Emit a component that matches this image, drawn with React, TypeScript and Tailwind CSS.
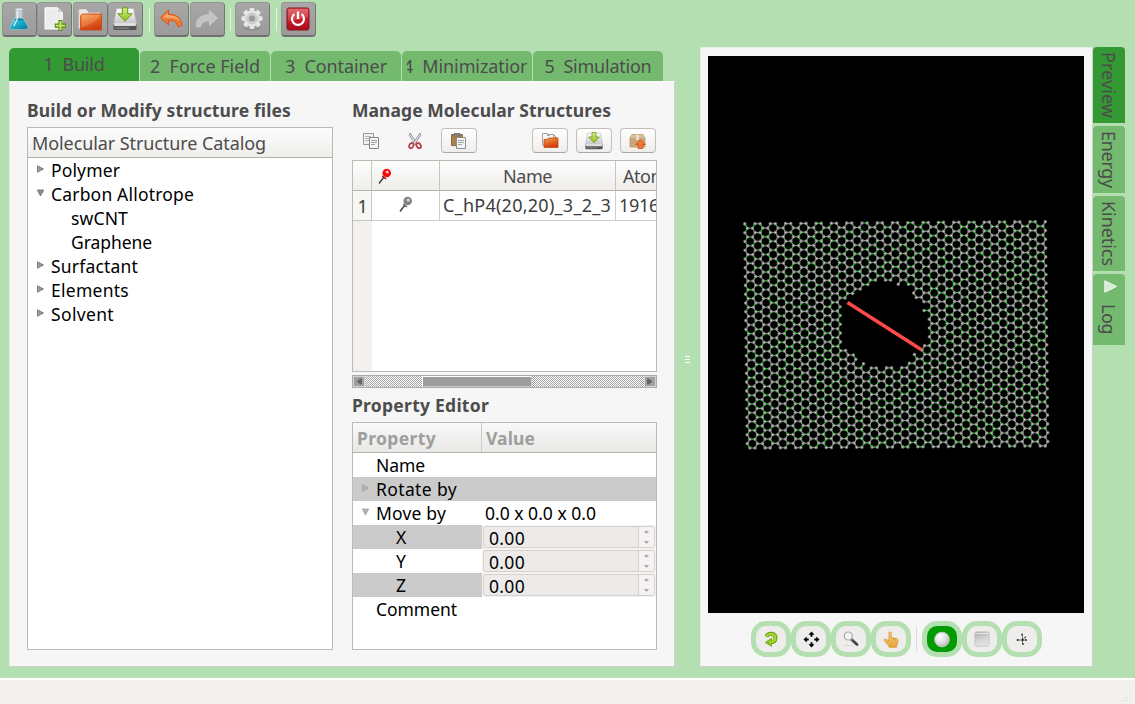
import React, { useLayoutEffect, useRef, useState } from "react";

/** One line of text whose letter spacing is tuned so that it spans `w` pixels. */
function Fit({ t, w, vertical, className = "" }: { t: string; w: number; vertical?: boolean; className?: string }) {
  const ref = useRef<HTMLSpanElement>(null);
  const [sp, setSp] = useState(0);
  useLayoutEffect(() => {
    const r = ref.current!.getBoundingClientRect();
    const len = vertical ? r.height : r.width;
    setSp((w - len) / t.length);
  }, []);
  return (
    <span
      ref={ref}
      className={`inline-block shrink-0 whitespace-pre ${vertical ? "[writing-mode:vertical-rl]" : ""} ${className}`}
      style={{ letterSpacing: sp }}
    >
      {t}
    </span>
  );
}

function Defs() {
  return (
    <svg className="absolute h-0 w-0">
      <defs>
        <linearGradient id="orange" x1="0" y1="0" x2="0.4" y2="1">
          <stop offset="0" stopColor="#f9a15a" />
          <stop offset="0.5" stopColor="#e96a24" />
          <stop offset="1" stopColor="#cf3f10" />
        </linearGradient>
        <linearGradient id="cyan" x1="0" y1="0" x2="1" y2="1">
          <stop offset="0" stopColor="#4fe0f2" />
          <stop offset="0.5" stopColor="#12a9c6" />
          <stop offset="1" stopColor="#0b7890" />
        </linearGradient>
        <linearGradient id="silver" x1="0" y1="0" x2="0" y2="1">
          <stop offset="0" stopColor="#ffffff" />
          <stop offset="1" stopColor="#c4c4c4" />
        </linearGradient>
        <linearGradient id="lime" x1="0" y1="0" x2="0" y2="1">
          <stop offset="0" stopColor="#d9f08a" />
          <stop offset="1" stopColor="#86bb1c" />
        </linearGradient>
        <linearGradient id="red" x1="0" y1="0" x2="0" y2="1">
          <stop offset="0" stopColor="#e0595f" />
          <stop offset="0.5" stopColor="#c9202b" />
          <stop offset="1" stopColor="#a80f1a" />
        </linearGradient>
        <radialGradient id="ball" cx="0.35" cy="0.3" r="0.8">
          <stop offset="0" stopColor="#ffffff" />
          <stop offset="0.6" stopColor="#dcdcdc" />
          <stop offset="1" stopColor="#a8a8a8" />
        </radialGradient>
        <linearGradient id="square" x1="0" y1="0" x2="0.3" y2="1">
          <stop offset="0" stopColor="#a8a8a8" />
          <stop offset="0.6" stopColor="#d4d4d4" />
          <stop offset="1" stopColor="#e2e2e2" />
        </linearGradient>
        <linearGradient id="hand" x1="0" y1="0" x2="0" y2="1">
          <stop offset="0" stopColor="#fbd37e" />
          <stop offset="1" stopColor="#e7a23c" />
        </linearGradient>
      </defs>
    </svg>
  );
}

const Flask = () => (
  <svg width="22" height="24" viewBox="1 0 22 24">
    <path d="M8.7 2v7.500L3.400 18.500Q2 22 5 22.700h14Q22 22 20.600 18.500L15.300 9.500V2z" fill="#d3e6ea" fillOpacity=".65" stroke="#a9bcc2" strokeWidth=".7" />
    <path d="M7.500 12.300h9l4 7q.9 2.700-1.700 3H5.200q-2.600-.3-1.700-3z" fill="url(#cyan)" />
    <ellipse cx="12" cy="12.500" rx="4.600" ry="1.200" fill="#0e8ba4" />
    <path d="M10.300 3v9l-3.500 7" stroke="#fff" strokeOpacity=".75" strokeWidth="1.500" fill="none" />
    <ellipse cx="12" cy="2.300" rx="3.900" ry="1.100" fill="#eef6f7" stroke="#9fb4ba" strokeWidth=".6" />
  </svg>
);
const NewDoc = () => (
  <svg width="24" height="24" viewBox="0 0 24 24">
    <path d="M3 .800h12.500l4.800 5V22H3z" fill="#ededed" stroke="#fff" strokeWidth="1" />
    <path d="M15.500.800v5h4.800z" fill="#c6c6c6" stroke="#fff" strokeWidth=".7" />
    <path d="M17 13.500h3v3.600h3.700v3h-3.700v3.600h-3v-3.600h-3.700v-3h3.700z" fill="#c9e86b" stroke="#568a0c" strokeWidth="1.100" />
  </svg>
);
const Folder = () => (
  <svg width="24" height="24" viewBox="0 0 24 24">
    <path d="M.8 21.500V3.200H8l2 2.600h12v15.700z" fill="#eee6e0" stroke="#d2bdb0" strokeWidth=".7" />
    <path d="M1 3h7l2 2.600" stroke="#fff" fill="none" />
    <path d="M4.500 7h19v16H2.500V8.500z" fill="url(#orange)" stroke="#c14a13" strokeWidth=".8" />
    <path d="M3.500 20Q15 18 23 8H4.500z" fill="#fff" fillOpacity=".16" />
  </svg>
);
const Docs = () => (
  <svg width="18" height="18" viewBox="0 0 18 18">
    <path d="M1.500 13V1.500h5l2 2V2.500h4l3 3V13z" fill="#f7f7f7" stroke="#a3a3a3" />
    <path d="M6.500 1.500v2h2M12.500 2.500v3h3" stroke="#a3a3a3" fill="none" />
    <path d="M3 7.500h3l1.500-1.500h9.500v9.500H3z" fill="url(#orange)" stroke="#c14a13" strokeWidth=".8" />
  </svg>
);
const Drive = ({ s = 24 }: { s?: number }) => (
  <svg width={s} height={s} viewBox="0 0 24 24">
    <path d="M3.500 1.500h17l3 15.500H.7z" fill="url(#silver)" stroke="#b8b8b8" strokeWidth=".8" />
    <rect x=".5" y="16.500" width="23" height="6.500" rx="1.500" fill="#555" />
    <rect x="1" y="16" width="22" height="3" rx="1" fill="#dedede" />
    <path d="M2.500 21h13" stroke="#aaa" strokeWidth="1.300" strokeDasharray="1 1" />
    <path d="M9.300.800h5.400v6h4.500L12 14.300 4.800 6.800h4.500z" fill="url(#lime)" stroke="#6a9a14" strokeWidth="1" />
  </svg>
);
const Undo = () => (
  <svg width="24" height="24" viewBox="0 0 24 24">
    <path d="M1.500 10.500L9.500 3v4.300C18 7 22.500 11.500 22.800 18.200q-.4 1.600-2.600 1.200h-1.600C18 14.800 14.800 13.200 9.500 13.400V18z" fill="#ef7b31" stroke="#d9531a" strokeWidth="1" strokeLinejoin="round" />
    <path d="M3.500 10.500L8.600 5.600v2.700c7 0 11 2 12.700 6.500C18 11 14 10.600 8.600 11z" fill="#fbb27c" fillOpacity=".8" />
  </svg>
);
const Redo = () => (
  <svg width="22" height="24" viewBox="1 0 22 24">
    <path d="M22.500 11L14.500 3.500v4.300C6 7.500 1.500 12 1.200 18.700q.4 1.600 2.600 1.200h1.600C6 15.300 9.200 13.700 14.500 13.900v4.500z" fill="#c3c3c3" stroke="#d2d2d2" strokeWidth=".7" strokeLinejoin="round" />
  </svg>
);
const Gear = () => (
  <svg width="24" height="24" viewBox="0 0 24 24">
    <ellipse cx="12" cy="22" rx="9" ry="1.500" fill="#888" fillOpacity=".6" />
    <g fill="#e6e6e6" transform="translate(12 11.500)">
      {[0, 45, 90, 135].map((a) => (
        <rect key={a} x="-2.300" y="-10.500" width="4.600" height="21" rx="1" transform={`rotate(${a})`} />
      ))}
      <circle r="8" />
    </g>
    <circle cx="12" cy="11.500" r="5.400" fill="#d4d4d4" stroke="#bcbcbc" strokeWidth=".8" />
    <circle cx="12" cy="11.500" r="3.500" fill="#9b9b9b" stroke="#c4c4c4" strokeWidth=".8" />
  </svg>
);
const Power = () => (
  <svg width="24" height="24" viewBox="0 0 24 24">
    <rect x="1" y="1" width="22" height="22" rx="2" fill="url(#red)" stroke="#8f0d18" strokeWidth="1" />
    <path d="M2 2h20v8Q12 14 2 14z" fill="#fff" fillOpacity=".12" />
    <path d="M8.300 7.200a6 6 0 1 0 7.400 0" stroke="#fff" strokeWidth="2.200" fill="none" />
    <path d="M12 4.500v7.500" stroke="#fff" strokeWidth="2.400" />
  </svg>
);
const Copy = () => (
  <svg width="18" height="18" viewBox="0 0 18 18">
    <path d="M1.500 1.500h10v11h-10z" fill="#f1f1f1" stroke="#999" />
    <path d="M3 4.500h6M3 6.500h6M3 8.500h4" stroke="#b5b5b5" />
    <path d="M7.500 5.500h9v11h-9z" fill="#f6f6f6" stroke="#858585" />
    <path d="M9 8.500h6M9 10.500h6M9 12.500h4" stroke="#a4a4a4" />
  </svg>
);
const Cut = () => (
  <svg width="16" height="18" viewBox="0 0 16 18">
    <path d="M3 1l7 10.500-1.600 1L2.400 3.500z" fill="#e9e9e9" stroke="#7d7d7d" strokeWidth=".8" />
    <path d="M13 1L6 11.500l1.600 1 6-9z" fill="#e9e9e9" stroke="#7d7d7d" strokeWidth=".8" />
    <ellipse cx="4.300" cy="13.600" rx="2" ry="2.700" fill="none" stroke="#b5404a" strokeWidth="1.800" transform="rotate(35 4.300 13.600)" />
    <ellipse cx="11.700" cy="13.600" rx="2" ry="2.700" fill="none" stroke="#b5404a" strokeWidth="1.800" transform="rotate(-35 11.700 13.600)" />
  </svg>
);
const Paste = () => (
  <svg width="18" height="18" viewBox="0 0 18 18">
    <path d="M1.500 2.500h11v11h-11z" fill="#a8834e" stroke="#8a6a3c" />
    <path d="M4 4v-2.500h6V4z" fill="#888" stroke="#666" strokeWidth=".8" />
    <path d="M6.500 5.500h9v11h-9z" fill="#f3f3f3" stroke="#8e8e8e" />
    <path d="M8 8.500h6M8 10.500h6M8 12.500h4" stroke="#a4a4a4" />
  </svg>
);
const Package = () => (
  <svg width="18" height="18" viewBox="0 0 18 18">
    <path d="M3 2.500h11L16 6v9H1V6z" fill="#c9a677" stroke="#b59a70" strokeWidth=".8" />
    <path d="M1.300 6L3 2.800h11L15.700 6z" fill="#d9c09a" />
    <path d="M7 2.500h3V8H7z" fill="#eadbc4" />
    <path d="M11.500 7.500l4.800 5h-2.500v4h-4.600v-4H6.700z" fill="#f0793a" stroke="#cb4c12" strokeWidth=".8" />
  </svg>
);
const Pin = ({ c, d }: { c: string; d: string }) => (
  <svg width="14" height="16" viewBox="0 0 14 16">
    <path d="M1 15.500L6 9" stroke="#333" strokeWidth="1.300" />
    <path d="M4.300 8l3.700 3" stroke={d} strokeWidth="1.600" />
    <circle cx="8.700" cy="5" r="4.300" fill={c} />
    <circle cx="9.200" cy="4" r="1.600" fill="#fff" fillOpacity=".7" />
  </svg>
);

const ToolButton = ({ children, ml }: { children: React.ReactNode; ml?: string }) => (
  <div className={`flex h-[35px] w-[35px] shrink-0 items-center justify-center rounded-[4px] border border-[#949494] border-r-[#767676] border-b-2 border-b-[#707070] bg-linear-to-b from-[#a7a7a7] to-[#9b9b9b] pr-px ${ml ?? ""}`}>
    {children}
  </div>
);
const Sep = ({ cls }: { cls: string }) => <div className={`h-[23px] w-px bg-[#e4f2e3] ${cls}`} />;

function Toolbar() {
  return (
    <div className="flex h-[48px] items-start pt-[2px] pl-[2px]">
      <ToolButton><Flask /></ToolButton>
      <ToolButton><NewDoc /></ToolButton>
      <ToolButton ml="ml-px"><Folder /></ToolButton>
      <ToolButton><Drive /></ToolButton>
      <Sep cls="ml-[6px] mt-[6px]" />
      <ToolButton ml="ml-[4px]"><Undo /></ToolButton>
      <ToolButton ml="ml-px"><Redo /></ToolButton>
      <Sep cls="ml-[5px] mt-[6px]" />
      <ToolButton ml="ml-[4px]"><Gear /></ToolButton>
      <Sep cls="ml-[6px] mt-[6px]" />
      <ToolButton ml="ml-[4px]"><Power /></ToolButton>
    </div>
  );
}

const TABS: [string, number][] = [
  ["2  Force Field", 110],
  ["3  Container", 102],
  ["4  Minimization", 128],
  ["5  Simulation", 107],
];

function Tabs() {
  return (
    <div className="flex h-[33px] items-end gap-px text-[18px] leading-[24px] text-[#4c4c4c]">
      <div className="flex h-[33px] w-[130px] items-center justify-center rounded-t-[5px] bg-[#339933] pb-[2px]">
        <Fit t="1  Build" w={61} />
      </div>
      {TABS.map(([t, w]) => (
        <div key={t} className="flex h-[30px] w-[130px] rounded-t-[5px] bg-[#73ba6f] px-[5px]">
          <div className="flex flex-1 items-center justify-center overflow-hidden">
            <Fit t={t} w={w} />
          </div>
        </div>
      ))}
    </div>
  );
}

const Arrow = ({ open, color = "#6f6f6f" }: { open?: boolean; color?: string }) => (
  <svg width="7" height="8" viewBox="0 0 7 8" className="relative -top-px shrink-0">
    {open ? (
      <path d="M.3 1h6.400L3.500 7z" fill={color} fillOpacity=".8" stroke={color} strokeWidth=".8" />
    ) : (
      <path d="M.5.700v6.600L6.500 4z" fill={color} fillOpacity=".7" stroke={color} strokeWidth=".8" />
    )}
  </svg>
);

const TREE: { t: string; w: number; child?: boolean; open?: boolean }[] = [
  { t: "Polymer", w: 69 },
  { t: "Carbon Allotrope", w: 143, open: true },
  { t: "swCNT", w: 57, child: true },
  { t: "Graphene", w: 81, child: true },
  { t: "Surfactant", w: 87 },
  { t: "Elements", w: 78 },
  { t: "Solvent", w: 63 },
];

function Catalog() {
  return (
    <section className="flex w-[306px] flex-col">
      <h2 className="flex h-[45px] items-end pb-[5px] text-[17.5px] leading-[23px] font-bold text-[#4c4c4c]">
        <Fit t="Build or Modify structure files" w={264} />
      </h2>
      <div className="h-[523px] border border-[#bdb9b4] bg-white">
        <div className="flex h-[30px] items-center border-b border-[#b5b1ab] bg-linear-to-b from-[#fdfdfd] to-[#efeeec] px-[4px] pt-px text-[18px] text-[#4c4c4c]">
          <Fit t="Molecular Structure Catalog" w={234} />
        </div>
        <ul className="text-[17.5px] leading-[24px] text-black">
          {TREE.map((n) => (
            <li key={n.t} className="flex h-6 items-center">
              <span className={`flex justify-end pr-[7px] ${n.child ? "w-[43px]" : "w-[23px]"}`}>
                {!n.child && <Arrow open={n.open} />}
              </span>
              <Fit t={n.t} w={n.w} />
            </li>
          ))}
        </ul>
      </div>
    </section>
  );
}

const IconButton = ({ children }: { children: React.ReactNode }) => (
  <div className="flex h-[25px] w-[36px] items-center justify-center rounded-[4px] border border-[#c2bfbb] border-b-[#aaa7a3] bg-linear-to-b from-[#fefefe] to-[#efeeec]">
    {children}
  </div>
);

function Structures() {
  return (
    <>
      <h2 className="flex h-[45px] items-end pb-[5px] text-[17.5px] leading-[23px] font-bold text-[#4c4c4c]">
        <Fit t="Manage Molecular Structures" w={259} />
      </h2>
      <div className="flex h-[33px] items-start pt-px pr-px">
        <div className="flex h-[25px] w-[36px] items-center justify-center pt-px pl-[2px]"><Copy /></div>
        <div className="flex h-[25px] w-[53px] items-center justify-center"><Cut /></div>
        <IconButton><Paste /></IconButton>
        <div className="ml-auto flex gap-[8px]">
          <IconButton><Docs /></IconButton>
          <IconButton><Drive s={18} /></IconButton>
          <IconButton><Package /></IconButton>
        </div>
      </div>
      <div className="flex h-[212px] overflow-hidden border border-[#bdb9b4] bg-white text-[18px] text-[#3c3c3c]">
        <div className="flex w-[19px] shrink-0 flex-col bg-[#f2f1f0]">
          <div className="h-[30px] border-r border-b border-[#c9c6c1] border-b-[#b5b1ab] bg-linear-to-b from-[#fdfdfd] to-[#efeeec]" />
          <div className="flex h-[30px] items-center justify-center border-r border-b border-[#c9c6c1] bg-[#f7f7f6] pt-px">
            <Fit t="1" w={9} />
          </div>
        </div>
        <div className="w-[68px] shrink-0">
          <div className="flex h-[30px] items-center border-r border-b border-[#c9c6c1] border-b-[#b5b1ab] bg-linear-to-b from-[#fdfdfd] to-[#efeeec] pl-[6px]">
            <Pin c="#f50a0a" d="#b80808" />
          </div>
          <div className="flex h-[30px] items-center justify-center border-r border-b border-[#cfcdca] pb-[3px]">
            <Pin c="#828282" d="#626262" />
          </div>
        </div>
        <div className="w-[176px] shrink-0">
          <div className="flex h-[30px] items-center justify-center border-r border-b border-[#c9c6c1] border-b-[#b5b1ab] bg-linear-to-b from-[#fdfdfd] to-[#efeeec] pt-px text-[#4c4c4c]">
            <Fit t="Name" w={49} />
          </div>
          <div className="flex h-[30px] items-center border-r border-b border-[#cfcdca] pl-[3px]">
            <Fit t="C_hP4(20,20)_3_2_3" w={168} />
          </div>
        </div>
        <div className="w-[100px] shrink-0">
          <div className="flex h-[30px] items-center border-b border-[#b5b1ab] bg-linear-to-b from-[#fdfdfd] to-[#efeeec] pt-px pl-[7px] text-[#4c4c4c]">
            <Fit t="Atoms" w={52} />
          </div>
          <div className="flex h-[30px] items-center border-b border-[#cfcdca] pl-[3px]">
            <Fit t="1916" w={40} />
          </div>
        </div>
      </div>
      <div className="mt-[3px] flex h-[13px] border border-[#aaa] bg-[repeating-conic-gradient(#a2a2a2_0_25%,#fff_0_50%)] bg-[length:2px_2px]">
        <div className="flex w-[12px] items-center justify-center border border-[#d4d4d4] bg-[#a0a0a0]">
          <svg width="6" height="7" viewBox="0 0 6 7"><path d="M4.500 1h1v5h-1L1 3.500z" fill="#666" stroke="#555" strokeWidth=".6" /></svg>
        </div>
        <div className="ml-[57px] w-[110px] border border-t-white border-r-[#ccc] border-b-[#ccc] border-l-white bg-[#9d9d9d]" />
        <div className="ml-auto flex w-[12px] items-center justify-center border border-[#d4d4d4] bg-[#a0a0a0]">
          <svg width="6" height="7" viewBox="0 0 6 7"><path d="M1.500 1h-1v5h1L5 3.500z" fill="#666" stroke="#555" strokeWidth=".6" /></svg>
        </div>
      </div>
    </>
  );
}

const Spin = () => (
  <div className="flex h-[24px] flex-1 items-center bg-[#f4f3f2] pr-[1px] pl-px">
    <div className="flex h-[22px] flex-1 overflow-hidden rounded-[3px] border border-[#d3d0cd] bg-[#ecebea]">
      <span className="flex flex-1 items-center pt-[2px] pl-[5px]"><Fit t="0.00" w={36} /></span>
      <span className="flex w-[16px] flex-col items-center justify-between border-l border-[#d3d0cd] bg-[#f4f3f2] py-[3px]">
        <svg width="5" height="3" viewBox="0 0 5 3"><path d="M0 3h5L2.500 0z" fill="#a5a5a5" /></svg>
        <svg width="5" height="3" viewBox="0 0 5 3"><path d="M0 0h5L2.500 3z" fill="#a5a5a5" /></svg>
      </span>
    </div>
  </div>
);

function Properties() {
  return (
    <>
      <h2 className="flex h-[34px] items-center text-[17.5px] leading-[23px] font-bold text-[#4c4c4c]">
        <Fit t="Property Editor" w={137} />
      </h2>
      <div className="h-[228px] border border-[#bdb9b4] bg-white text-[17.5px] leading-[24px] text-black">
        <div className="flex h-[30px] items-center border-b border-[#b5b1ab] bg-linear-to-b from-[#f8f8f8] to-[#e9e8e6] font-bold text-[#9e9e9e]">
          <div className="flex h-full w-[129px] items-center border-r border-[#cfccc8] pt-px pl-[4px]"><Fit t="Property" w={79} /></div>
          <div className="pt-px pl-[4px]"><Fit t="Value" w={49} /></div>
        </div>
        <div className="flex h-6 items-center pl-[23px]"><Fit t="Name" w={49} /></div>
        <div className="flex h-6 items-center bg-[#cbcbcb] pl-[9px]">
          <Arrow color="#a5a5a5" />
          <span className="pl-[7px]"><Fit t="Rotate by" w={81} /></span>
        </div>
        <div className="flex h-6 items-center pl-[9px]">
          <Arrow open color="#a0a0a0" />
          <span className="w-[116px] pl-[7px]"><Fit t="Move by" w={70} /></span>
          <Fit t="0.0 x 0.0 x 0.0" w={111} />
        </div>
        <div className="flex h-6">
          <div className="flex w-[129px] items-center bg-[#cbcbcb] pl-[43px]"><Fit t="X" w={11} /></div>
          <Spin />
        </div>
        <div className="flex h-6">
          <div className="flex w-[129px] items-center pl-[43px]"><Fit t="Y" w={11} /></div>
          <Spin />
        </div>
        <div className="flex h-6">
          <div className="flex w-[129px] items-center bg-[#cbcbcb] pl-[43px]"><Fit t="Z" w={11} /></div>
          <Spin />
        </div>
        <div className="flex h-6 items-center pl-[23px]"><Fit t="Comment" w={81} /></div>
      </div>
    </>
  );
}

/** Armchair graphene sheet with a circular pore, in viewport pixels. */
function buildSheet() {
  const atoms: [number, number][] = [];
  const px = 15.28;
  const py = 8.79;
  for (let r = 0; r < 52; r++) {
    const c0 = r % 2 === 0 ? 34.3 : 41.94;
    for (let k = 0; k <= 20; k++) {
      if (r % 2 === 1 && k === 20) continue;
      for (const s of [-2.55, 2.55]) {
        if (r % 2 === 0 && ((k === 0 && s < 0) || (k === 20 && s > 0))) continue;
        const u = c0 + k * px + s;
        const v = (r * py) / 2;
        const x = u + 0.011 * v;
        const y = 167.9 + v - 0.0072 * (u - 34);
        if (Math.hypot(x - 175.6, y - 268.8) < 42.6) continue;
        atoms.push([x, y]);
      }
    }
  }
  let bonds = "";
  let bright = "";
  let seed = 7;
  const rnd = () => (seed = (seed * 16807) % 2147483647) / 2147483647;
  for (let i = 0; i < atoms.length; i++) {
    for (let j = i + 1; j < Math.min(atoms.length, i + 48); j++) {
      const [a, b] = [atoms[i], atoms[j]];
      if (Math.hypot(a[0] - b[0], a[1] - b[1]) > 5.6) continue;
      const seg = `M${a[0].toFixed(1)} ${a[1].toFixed(1)}L${b[0].toFixed(1)} ${b[1].toFixed(1)}`;
      if (rnd() < 0.35) bright += seg;
      else bonds += seg;
    }
  }
  const dots = atoms.map(([x, y]) => `M${x.toFixed(1)} ${y.toFixed(1)}h.01`).join("");
  return { bonds, bright, dots };
}
const SHEET = buildSheet();

const Viewport = () => (
  <svg width="376" height="557" viewBox="0 0 376 557" className="block bg-black" fill="none">
    <path d={SHEET.bonds} stroke="#7fb07f" strokeWidth="1.100" />
    <path d={SHEET.bright} stroke="#00e400" strokeWidth="1.200" />
    <path d={SHEET.dots} stroke="#7d7a7d" strokeWidth="3.600" strokeLinecap="round" />
    <path d={SHEET.dots} stroke="#dcd6dc" strokeWidth="1.500" strokeLinecap="round" />
    <path d="M139.500 246.500L213.500 293.700" stroke="#ff4a4a" strokeWidth="3.400" />
  </svg>
);

const ViewButton = ({ active, children }: { active?: boolean; children: React.ReactNode }) => (
  <div className={`flex h-[36px] w-[40px] items-center justify-center rounded-[15px] border-[5px] border-[#b3dfb1] ${active ? "bg-[#009b00]" : "bg-[#eeedeb]"}`}>
    {children}
  </div>
);

function ViewButtons() {
  return (
    <div className="ml-[43px] mt-[8px] flex items-center">
      <ViewButton>
        <svg width="16" height="16" viewBox="0 0 16 16">
          <path d="M3.300 5.500Q5 2.500 8.500 2.800 12.800 3.500 12.500 7.500 12 11 8 11.200" fill="none" stroke="#6a9a10" strokeWidth="4" />
          <path d="M8.500 7.300v8L2.300 11.500z" fill="#8fc522" stroke="#6a9a10" strokeWidth=".8" />
          <path d="M3.300 5.200Q5 2.600 8.500 2.900 12.600 3.500 12.400 7.500 12 10.800 7 11.200" fill="none" stroke="#a5d832" strokeWidth="2.300" />
        </svg>
      </ViewButton>
      <ViewButton>
        <svg width="17" height="17" viewBox="0 0 17 17" fill="#000">
          <path d="M8.500.500l3 3.200h-2v2h-2v-2h-2zM8.500 16.500l3-3.200h-2v-2h-2v2h-2zM.5 8.500l3.200-3v2h2v2h-2v2zM16.500 8.500l-3.200-3v2h-2v2h2v2z" />
        </svg>
      </ViewButton>
      <ViewButton>
        <svg width="16" height="16" viewBox="0 0 16 16">
          <path d="M1 14.500h9" stroke="#d8d8d8" />
          <path d="M8.500 8.500l5.500 5" stroke="#444" strokeWidth="2.800" strokeLinecap="round" />
          <path d="M7.800 7.800l2 2" stroke="#777" strokeWidth="1.300" />
          <circle cx="5.300" cy="5" r="4" fill="#f4f4f4" stroke="#a8a8a8" strokeWidth="1.200" />
        </svg>
      </ViewButton>
      <ViewButton>
        <svg width="16" height="17" viewBox="0 0 16 17">
          <path d="M6 1.200q1.500-1 2.200.6v4.700l5.800 1.200q1.200.6.9 2.200l-1 4.600-.5 1.800H6.200l-.6-1.700Q3 12 1.200 9.500.8 8 2.300 8L6 10z" fill="url(#hand)" stroke="#d9963a" strokeWidth=".8" />
          <path d="M10.300 7v2.200M12.400 7.500v2" stroke="#d08b30" strokeWidth=".7" />
        </svg>
      </ViewButton>
      <div className="mr-[5px] ml-[5px] h-[24px] w-px bg-[#dcdad7]" />
      <ViewButton active>
        <svg width="16" height="17" viewBox="0 0 16 17">
          <circle cx="8" cy="8.500" r="7.300" fill="url(#ball)" stroke="#c9c9c9" />
        </svg>
      </ViewButton>
      <ViewButton>
        <svg width="16" height="16" viewBox="0 0 16 16">
          <rect x=".8" y=".8" width="14.400" height="14.400" rx="1.800" fill="url(#square)" stroke="#c9c9c9" />
          <path d="M1.500 2.500h13" stroke="#e4e4e4" />
        </svg>
      </ViewButton>
      <ViewButton>
        <svg width="12" height="12" viewBox="0 0 12 12">
          <path d="M6.500 1v10M1.500 7H10M6.500 7l3-3" stroke="#555" strokeWidth=".8" fill="none" />
          <g fill="#333"><circle cx="6" cy="1.500" r=".9" /><circle cx="6.500" cy="7" r="1.200" /><circle cx="1.700" cy="7" r="1.100" /><circle cx="10" cy="7" r="1" /><circle cx="7" cy="11" r=".9" /><circle cx="9.300" cy="4.200" r=".8" /></g>
        </svg>
      </ViewButton>
    </div>
  );
}

const SideTab = ({ cls, children }: { cls: string; children: React.ReactNode }) => (
  <div className={`flex w-[32px] flex-col items-center rounded-t-[4px] text-[18px] leading-[24px] text-[#4c4c4c] ${cls}`}>{children}</div>
);

export default function App() {
  return (
    <div className="flex h-[704px] w-[1135px] flex-col overflow-hidden bg-[#b3dfb1] font-['Noto_Sans','Open_Sans',sans-serif]">
      <Defs />
      <Toolbar />
      <main className="flex h-[630px]">
        <div className="ml-[9px] w-[666px]">
          <Tabs />
          <div className="flex h-[586px] gap-[19px] border border-t-[#fafafa] border-r-[#cfcfcf] border-b-[#cfcfcf] border-l-[#e9e9e9] bg-[#f6f6f6] pl-[17px]">
            <Catalog />
            <section className="flex w-[305px] flex-col">
              <Structures />
              <Properties />
            </section>
          </div>
        </div>
        <div className="flex w-[25px] flex-col items-center justify-center gap-px pb-[7px]">
          <div className="h-px w-[5px] bg-white" />
          <div className="mt-px h-px w-[5px] bg-white" />
          <div className="mt-px h-px w-[5px] bg-white" />
        </div>
        <div className="-mt-px h-[620px] w-[393px] rounded-[2px] border border-[#e6ebe5] border-r-[#cfcfcf] border-b-[#cfcfcf] bg-[#f6f6f6] pt-[8px] pl-[7px]">
          <Viewport />
          <ViewButtons />
        </div>
        <div className="-mt-px flex flex-col gap-[3px]">
          <SideTab cls="h-[76px] bg-[#339933] pt-[5px]"><Fit vertical t="Preview" w={66} /></SideTab>
          <SideTab cls="h-[67px] bg-[#73ba6f] pt-[5px]"><Fit vertical t="Energy" w={57} /></SideTab>
          <SideTab cls="h-[75px] bg-[#73ba6f] pt-[5px]"><Fit vertical t="Kinetics" w={65} /></SideTab>
          <SideTab cls="h-[71px] bg-[#73ba6f] pt-[6px]">
            <svg width="13" height="13" viewBox="0 0 13 13" className="ml-[2px]"><path d="M.8.800v11.400L12.500 6.500z" fill="#d5ead3" stroke="#f3faf2" /></svg>
            <Fit vertical t="Log" w={30} className="mt-[11px]" />
          </SideTab>
        </div>
      </main>
      <footer className="flex h-[26px] items-end justify-end border-t-2 border-t-white bg-[#f2f1f0] p-[2px]">
        <svg width="12" height="12" viewBox="0 0 12 12" fill="#dad8d6">
          <path d="M9 1h1v1H9zM6 4h1v1H6zM9 4h1v1H9zM3 7h1v1H3zM6 7h1v1H6zM9 7h1v1H9zM0 10h1v1H0zM3 10h1v1H3zM6 10h1v1H6zM9 10h1v1H9z" />
        </svg>
      </footer>
    </div>
  );
}
